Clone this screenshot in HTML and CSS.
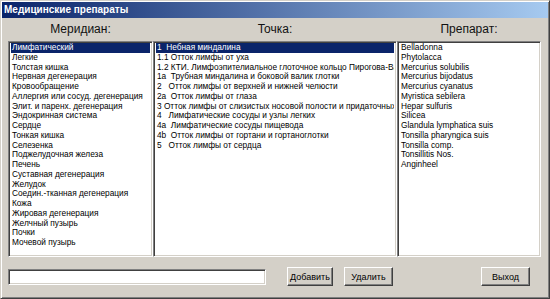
FILE: index.html
```html
<!DOCTYPE html>
<html lang="ru">
<head>
    <meta charset="UTF-8">
    <title>Медицинские препараты</title>
    <link rel="stylesheet" href="styles.css">
</head>
<body>
    <div class="window">
        <div class="titlebar">Медицинские препараты</div>

        <div class="panes">
            <div class="label">Меридиан:</div>
            <div class="label">Точка:</div>
            <div class="label">Препарат:</div>

            <!-- меридианы -->
            <ul class="list">
                <li class="selected">Лимфатический</li>
                <li>Легкие</li>
                <li>Толстая кишка</li>
                <li>Нервная дегенерация</li>
                <li>Кровообращение</li>
                <li>Аллергия или сосуд. дегенерация</li>
                <li>Элит. и паренх. дегенерация</li>
                <li>Эндокринная система</li>
                <li>Сердце</li>
                <li>Тонкая кишка</li>
                <li>Селезенка</li>
                <li>Поджелудочная железа</li>
                <li>Печень</li>
                <li>Суставная дегенерация</li>
                <li>Желудок</li>
                <li>Соедин.-тканная дегенерация</li>
                <li>Кожа</li>
                <li>Жировая дегенерация</li>
                <li>Желчный пузырь</li>
                <li>Почки</li>
                <li>Мочевой пузырь</li>
            </ul>

            <!-- точки -->
            <ul class="list">
                <li class="selected">1  Небная миндалина</li>
                <li>1.1 Отток лимфы от уха</li>
                <li>1.2 КТИ. Лимфоэпителиальное глоточное кольцо Пирогова-Ва</li>
                <li>1a  Трубная миндалина и боковой валик глотки</li>
                <li>2   Отток лимфы от верхней и нижней челюсти</li>
                <li>2a  Отток лимфы от глаза</li>
                <li>3 Отток лимфы от слизистых носовой полости и придаточных п</li>
                <li>4   Лимфатические сосуды и узлы легких</li>
                <li>4a  Лимфатические сосуды пищевода</li>
                <li>4b  Отток лимфы от гортани и гортаноглотки</li>
                <li>5   Отток лимфы от сердца</li>
            </ul>

            <!-- препараты -->
            <ul class="list">
                <li>Belladonna</li>
                <li>Phytolacca</li>
                <li>Mercurius solubilis</li>
                <li>Mercurius bijodatus</li>
                <li>Mercurius cyanatus</li>
                <li>Myristica sebilera</li>
                <li>Hepar sulfuris</li>
                <li>Silicea</li>
                <li>Glandula lymphatica suis</li>
                <li>Tonsilla pharyngica suis</li>
                <li>Tonsilla comp.</li>
                <li>Tonsillitis Nos.</li>
                <li>Anginheel</li>
            </ul>
        </div>

        <div class="actions">
            <input type="text" class="edit">
            <button class="btn btn-add">Добавить</button>
            <button class="btn btn-del">Удалить</button>
            <button class="btn btn-exit">Выход</button>
        </div>
    </div>
</body>
</html>
```

FILE: styles.css
```css
/* базовый сброс */
* {
    margin: 0;
    padding: 0;
    box-sizing: border-box;
}

body {
    background: #d4d0c8;
    font-family: "Liberation Sans", Arial, sans-serif;
    color: #000;
}

.window {
    width: 550px;
    height: 299px;
    background: #d4d0c8;
    border: 1px solid;
    border-color: #d4d0c8 #404040 #404040 #d4d0c8;
    box-shadow: inset 1px 1px 0 #fff, inset -1px -1px 0 #808080;
    padding: 1px;
}

.titlebar {
    height: 16px;
    padding-left: 2px;
    background: linear-gradient(to right, #0a246a, #a6caf0);
    color: #fff;
    font-weight: bold;
    font-size: 10px;
    line-height: 15px;
}

/* три колонки со списками */
.panes {
    display: grid;
    grid-template-columns: 145px 244px 144px;
    grid-template-rows: 23px 216px;
    padding-left: 6px;
}

.label {
    text-align: center;
    font-size: 12px;
    line-height: 22px;
    color: #111;
}

.list {
    list-style: none;
    background: #fff;
    border: 1px solid;
    border-color: #808080 #fff #fff #808080;
    box-shadow: inset 1px 1px 0 #404040, inset -1px -1px 0 #d4d0c8;
    padding: 1px 2px;
    overflow: hidden;
    font-size: 8.3px;
    line-height: 9.75px;
}

.list li {
    white-space: pre;
    overflow: hidden;
    padding-left: 1px;
}

.list li.selected {
    background: #0a246a;
    color: #fff;
}

/* нижняя панель */
.actions {
    display: flex;
    align-items: center;
    margin-top: 10px;
    padding: 0 18px 0 6px;
}

.edit {
    width: 258px;
    height: 16px;
    background: #fff;
    border: 1px solid;
    border-color: #808080 #fff #fff #808080;
    box-shadow: inset 1px 1px 0 #404040, inset -1px -1px 0 #d4d0c8;
    outline: none;
}

.btn {
    height: 19px;
    background: #d4d0c8;
    border: 1px solid;
    border-color: #fff #404040 #404040 #fff;
    box-shadow: inset -1px -1px 0 #808080;
    font-family: "Liberation Sans", Arial, sans-serif;
    font-size: 9px;
    color: #000;
}

.btn-add {
    width: 46px;
    margin-left: 21px;
}

.btn-del {
    width: 49px;
    margin-left: 11px;
}

.btn-exit {
    width: 49px;
    margin-left: auto;
}
```
